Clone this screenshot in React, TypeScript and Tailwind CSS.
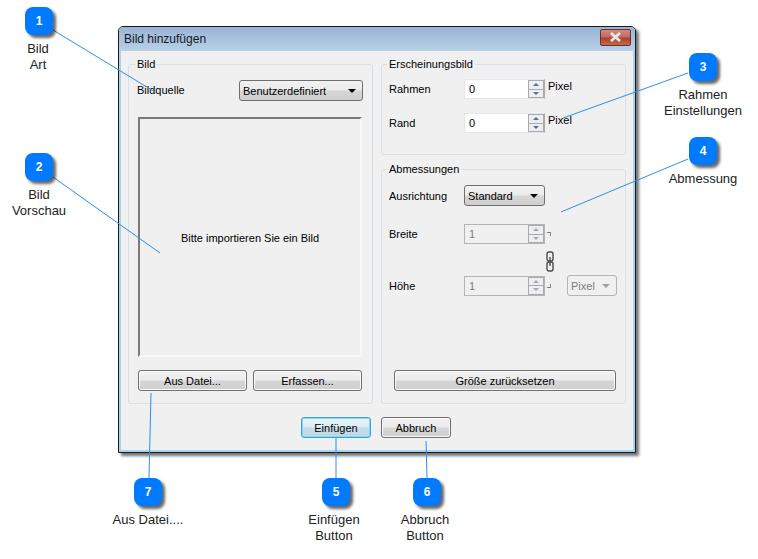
const uiFont = "font-['Liberation_Sans',sans-serif] text-[11px] leading-[14px]"

const callouts = [
  { n: 1, cls: 'left-[25px] top-[7px]' },
  { n: 2, cls: 'left-[25px] top-[153px]' },
  { n: 3, cls: 'left-[689px] top-[53px]' },
  { n: 4, cls: 'left-[689px] top-[137px]' },
  { n: 5, cls: 'left-[322px] top-[478px]' },
  { n: 6, cls: 'left-[413px] top-[478px]' },
  { n: 7, cls: 'left-[134px] top-[478px]' },
]

const captions = [
  { text: ['Bild', 'Art'], cls: 'left-[8px] top-[41px] w-[60px]' },
  { text: ['Bild', 'Vorschau'], cls: 'left-[4px] top-[187px] w-[70px]' },
  { text: ['Rahmen', 'Einstellungen'], cls: 'left-[653px] top-[87px] w-[100px]' },
  { text: ['Abmessung'], cls: 'left-[653px] top-[171px] w-[100px]' },
  { text: ['Aus Datei....'], cls: 'left-[98px] top-[512px] w-[100px]' },
  { text: ['Einfügen', 'Button'], cls: 'left-[294px] top-[512px] w-[80px]' },
  { text: ['Abbruch', 'Button'], cls: 'left-[385px] top-[512px] w-[80px]' },
]

const lines = [
  [53, 30, 155, 92],
  [53, 177, 160, 253],
  [688, 73, 563, 118],
  [688, 159, 561, 212],
  [336, 438, 336, 478],
  [426, 441, 427, 478],
  [151, 393, 149, 478],
]

function Group({ title, legendClass, className, children }: { title: string; legendClass: string; className: string; children: React.ReactNode }) {
  return (
    <fieldset className={`border border-[#d9dfe6] rounded-[3px] min-w-0 ${className}`}>
      <legend className={`px-[2px] text-black ${legendClass}`}>{title}</legend>
      {children}
    </fieldset>
  )
}

function Button({ label, className = '' }: { label: string; className?: string }) {
  return (
    <button className={`h-[21px] border border-[#707070] rounded-[3px] text-black bg-[linear-gradient(#f2f2f2_0%,#ebebeb_48%,#d6d6d6_52%,#cfcfcf_100%)] shadow-[inset_0_0_0_1px_#fbfbfb] ${className}`}>
      {label}
    </button>
  )
}

function Select({ value, disabled, className }: { value: string; disabled?: boolean; className: string }) {
  return (
    <div
      className={`h-[21px] flex items-center justify-between pl-[3px] pr-[6px] rounded-[3px] border ${
        disabled
          ? 'border-[#b5b5b5] bg-[#f0f0f0] text-[#7d7d7d]'
          : 'border-[#707070] text-black bg-[linear-gradient(#f2f2f2_0%,#ebebeb_48%,#d6d6d6_52%,#cfcfcf_100%)]'
      } ${className}`}
    >
      <span>{value}</span>
      <span className={`w-0 h-0 border-x-[4px] border-x-transparent border-t-[4px] ${disabled ? 'border-t-[#a0a0a0]' : 'border-t-black'}`} />
    </div>
  )
}

function Spin({ value, disabled }: { value: string; disabled?: boolean }) {
  const up = disabled ? 'border-b-[#a8a8a8]' : 'border-b-[#5a6a9a]'
  const down = disabled ? 'border-t-[#a8a8a8]' : 'border-t-[#5a6a9a]'
  return (
    <div className={`w-[81px] h-[20px] flex border ${disabled ? 'bg-[#f0f0f0] border-[#b5b5b5] text-[#7d7d7d]' : 'bg-white border-[#e2e8ee] border-r-[#ababab] text-black'}`}>
      <span className="flex-1 pl-[4px] self-center">{value}</span>
      <div className="w-[16px] flex flex-col gap-[1px] border border-[#ababab] bg-[#ababab]">
        <div className="flex-1 flex items-center justify-center bg-[#eceef2]">
          <span className={`w-0 h-0 border-x-[3px] border-x-transparent border-b-[3px] ${up}`} />
        </div>
        <div className="flex-1 flex items-center justify-center bg-[#eceef2]">
          <span className={`w-0 h-0 border-x-[3px] border-x-transparent border-t-[3px] ${down}`} />
        </div>
      </div>
    </div>
  )
}

function Field({ label, children }: { label: string; children: React.ReactNode }) {
  return (
    <div className="flex items-center">
      <span className="w-[75px] text-black">{label}</span>
      {children}
    </div>
  )
}

function LinkIcon() {
  return (
    <svg width="9" height="21" viewBox="0 0 9 21" fill="none" stroke="#4a4a4a" strokeWidth="1.4">
      <rect x="1" y="1" width="6" height="9" rx="2" />
      <rect x="1" y="11" width="6" height="9" rx="2" />
      <path d="M4 6v9" />
    </svg>
  )
}

function Dialog() {
  return (
    <div className={`absolute left-[118px] top-[26px] w-[518px] h-[427px] rounded-t-[5px] border border-[#1a1a1a] shadow-[3px_3px_3px_rgba(0,0,0,0.55)] flex flex-col bg-[#f0f0f0] ${uiFont}`}>
      {/* Title bar */}
      <div className="h-[24px] shrink-0 flex items-center justify-between pl-[5px] pr-[4px] rounded-t-[4px] bg-[linear-gradient(#98b4d4,#b9d1e8)]">
        <span className="text-[#10171f] text-[12px]">Bild hinzufügen</span>
        <div className="w-[31px] h-[17px] -mt-[4px] flex items-center justify-center rounded-[2px] border border-[#6e2f2a] bg-[linear-gradient(#d08a7e_0%,#c46a5a_48%,#ae3f2c_52%,#c0694f_100%)]">
          <svg width="15" height="10" viewBox="0 0 15 10" stroke="#e8e8e8" strokeWidth="2.8">
            <path d="M3 1l9 8M12 1l-9 8" />
          </svg>
        </div>
      </div>

      {/* Body */}
      <div className="flex-1 flex flex-col border-x-2 border-b-2 border-x-[#a9d3ec] border-b-[#a9d3ec]">
        <div className="flex gap-[8px] pl-[7px] pt-[6px]">
          <Group title="Bild" legendClass="-ml-[3px]" className="w-[245px] h-[347px] pl-[9px] pr-[10px]">
            <div className="flex items-center justify-between pt-[9px] pb-[16px] -mr-[1px]">
              <span className="text-black -mt-[2px] -ml-[1px]">Bildquelle</span>
              <Select value="Benutzerdefiniert" className="w-[124px]" />
            </div>
            <div className="h-[240px] pt-[2px] flex items-center justify-center border-2 border-[#f7f7f7] border-t-[#7a7a7a] border-l-[#7a7a7a] text-black">
              Bitte importieren Sie ein Bild
            </div>
            <div className="flex justify-between mt-[13px]">
              <Button label="Aus Datei..." className="w-[109px]" />
              <Button label="Erfassen..." className="w-[109px]" />
            </div>
          </Group>

          <div className="w-[245px] flex flex-col gap-[7px]">
            <Group title="Erscheinungsbild" legendClass="-ml-[2px]" className="h-[98px] pl-[7px]">
              <div className="flex flex-col gap-[14px] pt-[8px]">
                <Field label="Rahmen">
                  <Spin value="0" />
                  <span className="ml-[3px] -mt-[6px] text-black">Pixel</span>
                </Field>
                <Field label="Rand">
                  <Spin value="0" />
                  <span className="ml-[3px] -mt-[6px] text-black">Pixel</span>
                </Field>
              </div>
            </Group>

            <Group title="Abmessungen" legendClass="-ml-[2px]" className="h-[242px] pl-[7px]">
              <div className="pt-[9px]">
                <Field label="Ausrichtung">
                  <Select value="Standard" className="w-[81px]" />
                </Field>
                <div className="mt-[18px]">
                  <Field label="Breite">
                    <Spin value="1" disabled />
                    <span className="ml-[2px] w-[4px] h-[4px] border-t border-r border-[#808080]" />
                  </Field>
                </div>
                <div className="ml-[157px] mt-[7px] h-[25px] flex items-start">
                  <LinkIcon />
                </div>
                <div className="flex items-center -mt-[1px]">
                  <span className="w-[75px] text-black">Höhe</span>
                  <Spin value="1" disabled />
                  <span className="ml-[2px] w-[4px] h-[4px] border-b border-r border-[#808080]" />
                  <Select value="Pixel" disabled className="ml-[16px] w-[50px]" />
                </div>
                <Button label="Größe zurücksetzen" className="block ml-[5px] mt-[74px] w-[222px]" />
              </div>
            </Group>
          </div>
        </div>

        <div className="flex justify-center gap-[10px] mt-[13px] pr-[2px]">
          <button className="w-[70px] h-[21px] border border-[#3c9fd0] rounded-[3px] text-black bg-[linear-gradient(#eaf4f9_0%,#dcebf3_48%,#c6dde9_52%,#bcd6e4_100%)] shadow-[inset_0_0_0_1px_#7fe0f5]">
            Einfügen
          </button>
          <Button label="Abbruch" className="w-[70px]" />
        </div>
      </div>
    </div>
  )
}

export default function App() {
  return (
    <div className="relative w-[758px] h-[559px] bg-white overflow-hidden">
      <Dialog />

      <svg className="absolute left-0 top-0" width="758" height="559" stroke="#2b8ff0" strokeWidth="1">
        {lines.map(([x1, y1, x2, y2], i) => (
          <line key={i} x1={x1} y1={y1} x2={x2} y2={y2} />
        ))}
      </svg>

      {callouts.map((c) => (
        <div
          key={c.n}
          className={`absolute w-[28px] h-[28px] flex items-center justify-center rounded-[8px] bg-[#007bff] text-white font-bold text-[12px] font-['Liberation_Sans',sans-serif] shadow-[3px_3px_3px_rgba(0,0,0,0.6)] ${c.cls}`}
        >
          {c.n}
        </div>
      ))}

      {captions.map((c) => (
        <div
          key={c.text[0] + c.cls}
          className={`absolute text-center text-[13px] leading-[16px] text-[#222] font-['Liberation_Sans',sans-serif] ${c.cls}`}
        >
          {c.text.map((t) => (
            <div key={t}>{t}</div>
          ))}
        </div>
      ))}
    </div>
  )
}
